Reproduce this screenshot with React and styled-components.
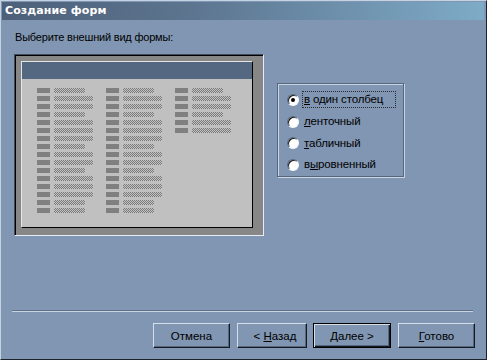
import React from "react";
import styled, { createGlobalStyle } from "styled-components";

const Global = createGlobalStyle`
  html, body { margin: 0; padding: 0; background: #8096b2; }
  * { box-sizing: border-box; }
`;

const Window = styled.div`
  width: 487px;
  height: 360px;
  display: flex;
  flex-direction: column;
  background: #8096b2;
  border-style: solid;
  border-width: 1px;
  border-color: #c4d3e4 #1c232c #1c232c #c4d3e4;
  padding: 1px 2px 1px 1px;
  font-family: "Liberation Sans", Arial, sans-serif;
  font-size: 11.5px;
  color: #000;
  overflow: hidden;
`;

const TitleBar = styled.div`
  height: 18px;
  line-height: 18px;
  padding-left: 3px;
  background: linear-gradient(to right, #4d607a 0%, #5d7590 40%, #7eabc7 100%);
  color: #fff;
  font-family: "DejaVu Sans", Verdana, sans-serif;
  font-weight: bold;
  font-size: 11px;
  letter-spacing: 0.1px;
`;

const Content = styled.div`
  flex: 1;
  display: flex;
  flex-direction: column;
  padding: 0 0 0 12px;
`;

const Prompt = styled.div`
  margin-top: 10px;
  height: 14px;
  line-height: 14px;
  padding-left: 1px;
  font-size: 11px;
  letter-spacing: -0.2px;
`;

const Main = styled.div`
  display: flex;
  align-items: flex-start;
  margin-top: 10px;
`;

const Frame = styled.div`
  width: 250px;
  height: 182px;
  background: #878787;
  border-style: solid;
  border-width: 1px;
  border-color: #3e4b5c #e6edf5 #e6edf5 #3e4b5c;
  box-shadow: inset 1px 1px 0 #000;
  padding: 6px 7px 5px 6px;
`;

const FormSheet = styled.div`
  width: 232px;
  height: 167px;
  background: #c0c0c0;
  border-style: solid;
  border-width: 1px;
  border-color: #e4e4e4 #000 #000 #e4e4e4;
  display: flex;
  flex-direction: column;
`;

const SheetHeader = styled.div`
  height: 17px;
  background: #546881;
`;

const SheetBody = styled.div`
  display: flex;
  padding: 9px 0 0 15px;
`;

const Column = styled.div`
  width: 69px;
  display: flex;
  flex-direction: column;
  gap: 3px;
`;

const Field = styled.div`
  display: flex;
  gap: 4px;
  height: 5px;
`;

const FieldLabel = styled.div`
  width: 13px;
  height: 5px;
  background: #808080;
`;

const FieldValue = styled.div`
  width: ${(p) => (p.$long ? 39 : 31)}px;
  height: 5px;
  background-image: repeating-conic-gradient(#7a7a7a 0% 25%, #c4c4c4 0% 50%);
  background-size: 2px 2px;
`;

const GroupBox = styled.div`
  margin: 29px 0 0 13px;
  width: 127px;
  height: 94px;
  border: 1px solid #56677d;
  box-shadow: 1px 1px 0 #c8d5e4, inset 1px 1px 0 #c8d5e4;
  padding: 5px 0 0 9px;
  display: flex;
  flex-direction: column;
`;

const RadioRow = styled.div`
  height: 21.7px;
  display: flex;
  align-items: center;
  gap: 3px;
`;

const RadioDot = styled.span`
  position: relative;
  flex: none;
  width: 12px;
  height: 12px;
  border-radius: 50%;
  background: #fff;
  border-style: solid;
  border-width: 1px;
  border-color: #56677d #f2f5f9 #f2f5f9 #56677d;
  box-shadow: inset 1px 1px 0 #1a1a1a;
  &::after {
    content: "";
    display: ${(p) => (p.$checked ? "block" : "none")};
    position: absolute;
    left: 3px;
    top: 3px;
    width: 4px;
    height: 4px;
    border-radius: 50%;
    background: #000;
  }
`;

const RadioLabel = styled.span`
  display: inline-block;
  line-height: 15px;
  padding: 0 8px 0 1px;
  letter-spacing: -0.15px;
  border: 1px ${(p) => (p.$focused ? "dotted #2b2b2b" : "solid transparent")};
  ${(p) => (p.$focused ? "width: 94px;" : "")}
  white-space: nowrap;
`;

const Separator = styled.div`
  margin: 74px 0 0 -2px;
  width: 461px;
  height: 2px;
  border-top: 1px solid #5f7189;
  border-bottom: 1px solid #c6d4e4;
`;

const ButtonRow = styled.div`
  display: flex;
  margin-top: 11px;
  padding-left: 139px;
`;

const Button = styled.button`
  width: ${(p) => p.$w}px;
  height: 25px;
  margin-right: ${(p) => p.$gap || 0}px;
  padding: ${(p) => (p.$shift ? "0 0 0 6px" : "0")};
  background: #8096b2;
  font-family: "Liberation Sans", Arial, sans-serif;
  font-size: 11.5px;
  color: #000;
  border-style: solid;
  border-width: 1px;
  border-color: ${(p) => (p.$default ? "#000" : "#d4dfec #141a22 #141a22 #d4dfec")};
  box-shadow: ${(p) =>
    p.$default
      ? "inset 1px 1px 0 #d4dfec, inset -1px -1px 0 #141a22, inset -2px -2px 0 #56677d"
      : "inset -1px -1px 0 #56677d"};
  cursor: default;
  u { text-decoration: underline; }
`;

const pattern = "SLLSLLLSLLSLLLSS";
const columns = [pattern, pattern, pattern.slice(0, 6)];

const options = [
  { key: "col", label: <><u>в</u> один столбец</>, checked: true },
  { key: "tape", label: <><u>л</u>енточный</> },
  { key: "table", label: <><u>т</u>абличный</> },
  { key: "just", label: <>в<u>ы</u>ровненный</> },
];

export default function App() {
  return (
    <>
      <Global />
      <Window>
        <TitleBar>Создание форм</TitleBar>
        <Content>
          <Prompt>Выберите внешний вид формы:</Prompt>
          <Main>
            <Frame>
              <FormSheet>
                <SheetHeader />
                <SheetBody>
                  {columns.map((col, ci) => (
                    <Column key={ci}>
                      {col.split("").map((c, i) => (
                        <Field key={i}>
                          <FieldLabel />
                          <FieldValue $long={c === "L"} />
                        </Field>
                      ))}
                    </Column>
                  ))}
                </SheetBody>
              </FormSheet>
            </Frame>
            <GroupBox>
              {options.map((o) => (
                <RadioRow key={o.key}>
                  <RadioDot $checked={o.checked} />
                  <RadioLabel $focused={o.checked}>{o.label}</RadioLabel>
                </RadioRow>
              ))}
            </GroupBox>
          </Main>
          <Separator />
          <ButtonRow>
            <Button $w={77} $gap={7}>Отмена</Button>
            <Button $w={70} $gap={6} $shift>&lt; <u>Н</u>азад</Button>
            <Button $w={78} $gap={7} $default><u>Д</u>алее &gt;</Button>
            <Button $w={77}><u>Г</u>отово</Button>
          </ButtonRow>
        </Content>
      </Window>
    </>
  );
}
